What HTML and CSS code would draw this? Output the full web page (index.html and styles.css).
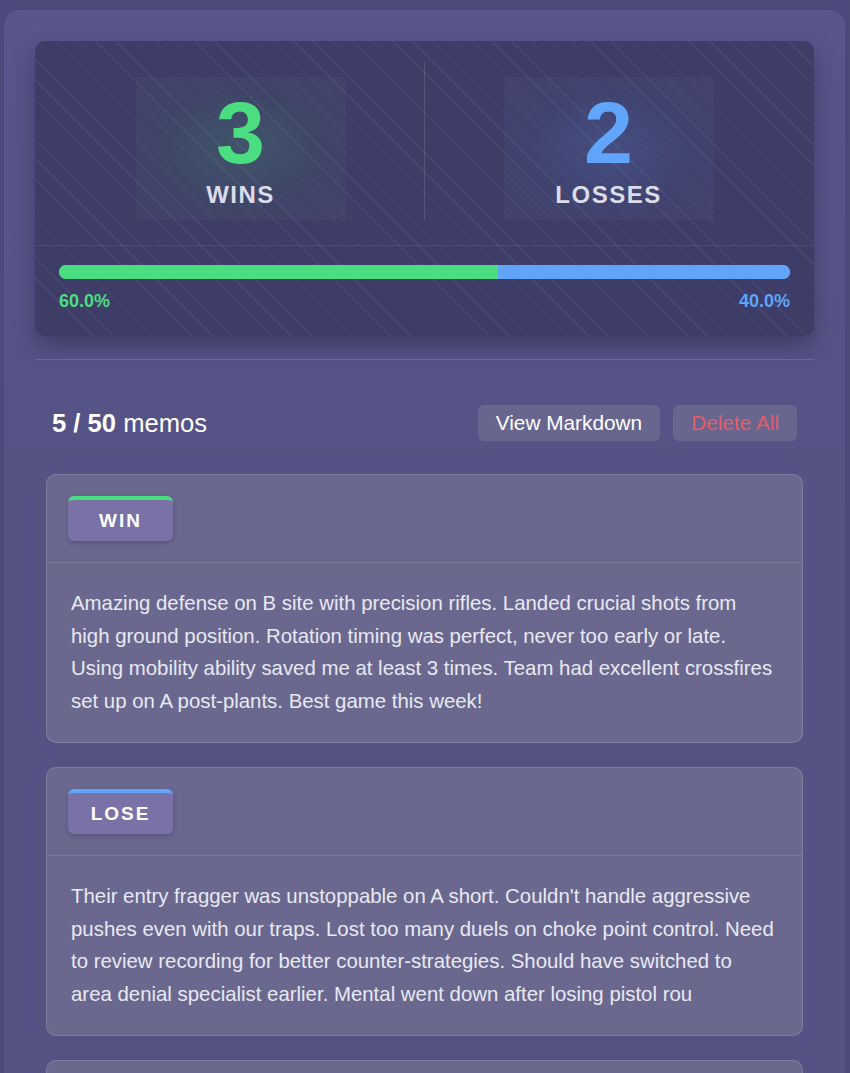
FILE: index.html
```html
<!DOCTYPE html>
<html lang="en">
<head>
<meta charset="utf-8">
<title>Match Memos</title>
<link rel="stylesheet" href="styles.css">
</head>
<body>
<main class="app">
  <section class="stats-card">
    <div class="stats-row">
      <div class="stat-col">
        <div class="stat-box stat-win">
          <div class="stat-num">3</div>
          <div class="stat-label">WINS</div>
        </div>
      </div>
      <div class="stat-divider"></div>
      <div class="stat-col">
        <div class="stat-box stat-loss">
          <div class="stat-num">2</div>
          <div class="stat-label">LOSSES</div>
        </div>
      </div>
    </div>
    <div class="progress-area">
      <div class="bar">
        <div class="bar-win" style="width:60%"></div>
        <div class="bar-loss"></div>
      </div>
      <div class="pct-row">
        <span class="pct-win">60.0%</span>
        <span class="pct-loss">40.0%</span>
      </div>
    </div>
  </section>

  <hr class="sep">

  <section class="memos">
    <div class="memos-head">
      <div class="count"><strong>5 / 50</strong> memos</div>
      <div class="actions">
        <button class="btn">View Markdown</button>
        <button class="btn btn-danger">Delete All</button>
      </div>
    </div>

    <article class="memo">
      <div class="memo-head"><span class="badge badge-win">WIN</span></div>
      <div class="memo-body">Amazing defense on B site with precision rifles. Landed crucial shots from high ground position. Rotation timing was perfect, never too early or late. Using mobility ability saved me at least 3 times. Team had excellent crossfires set up on A post-plants. Best game this week!</div>
    </article>

    <article class="memo">
      <div class="memo-head"><span class="badge badge-lose">LOSE</span></div>
      <div class="memo-body">Their entry fragger was unstoppable on A short. Couldn't handle aggressive pushes even with our traps. Lost too many duels on choke point control. Need to review recording for better counter-strategies. Should have switched to area denial specialist earlier. Mental went down after losing pistol rou</div>
    </article>

    <article class="memo">
      <div class="memo-head"><span class="badge badge-win">WIN</span></div>
      <div class="memo-body">Great comms and utility usage all game. Clutched two rounds on retake.</div>
    </article>
  </section>
</main>
</body>
</html>
```

FILE: styles.css
```css
* { box-sizing: border-box; }

html, body {
  margin: 0;
  padding: 0;
}

body {
  background: #4b4a7b;
  font-family: "Liberation Sans", Arial, sans-serif;
  color: #ffffff;
  overflow: hidden;
}

.app {
  margin: 10px 5px 0 4px;
  border-radius: 16px;
  background: linear-gradient(180deg, #58568a 0%, #555384 40%, #545282 100%);
  padding: 31px 31px 40px;
  min-height: 1100px;
}

/* Stats card */
.stats-card {
  border-radius: 10px;
  background-color: #3e3d67;
  background-image: repeating-linear-gradient(45deg,
    rgba(255,255,255,0) 0px,
    rgba(255,255,255,0) 13px,
    rgba(255,255,255,0.06) 13px,
    rgba(255,255,255,0.06) 14px);
  box-shadow: 0 10px 22px rgba(20, 18, 50, 0.35);
}

.stats-row {
  display: flex;
  padding: 21px 22px 25px;
  border-bottom: 1px solid rgba(255,255,255,0.08);
}

.stat-col {
  flex: 1;
  display: flex;
  justify-content: center;
  padding-top: 15px;
}

.stat-divider {
  width: 1px;
  background: rgba(255,255,255,0.12);
}

.stat-box {
  width: 210px;
  padding: 12px 0 11px;
  display: flex;
  flex-direction: column;
  align-items: center;
  gap: 4px;
}

.stat-win {
  background: radial-gradient(ellipse at center, rgba(74,222,128,0.14) 0%, rgba(74,222,128,0.05) 55%, rgba(255,255,255,0.025) 100%);
}

.stat-loss {
  background: radial-gradient(ellipse at center, rgba(96,165,250,0.17) 0%, rgba(96,165,250,0.06) 55%, rgba(255,255,255,0.025) 100%);
}

.stat-num {
  font-size: 88px;
  font-weight: 700;
  line-height: 1;
}

.stat-win .stat-num { color: #4ade80; }
.stat-loss .stat-num { color: #60a5fa; }

.stat-label {
  font-size: 24px;
  font-weight: 700;
  letter-spacing: 1.5px;
  color: #dcdce8;
}

.progress-area {
  padding: 19px 24px 24px;
}

.bar {
  display: flex;
  height: 14px;
  border-radius: 7px;
  overflow: hidden;
  background: #60a5fa;
}

.bar-win { background: #4ade80; }
.bar-loss { flex: 1; background: #60a5fa; }

.pct-row {
  display: flex;
  justify-content: space-between;
  margin-top: 12px;
  font-size: 18px;
  font-weight: 700;
}

.pct-win { color: #4ade80; }
.pct-loss { color: #60a5fa; }

.sep {
  margin: 23px 0 0;
  border: 0;
  height: 1px;
  background: rgba(255,255,255,0.14);
}

/* Memos */
.memos {
  padding: 0 11px;
}

.memos-head {
  display: flex;
  justify-content: space-between;
  align-items: center;
  margin-top: 45px;
  padding: 0 6px;
}

.count {
  font-size: 25.6px;
  color: #ffffff;
}

.count strong { font-weight: 700; }

.actions {
  display: flex;
  gap: 13px;
}

.btn {
  height: 36px;
  padding: 0 18px;
  border: 0;
  border-radius: 6px;
  background: #68668f;
  color: #ffffff;
  font-family: "Liberation Sans", Arial, sans-serif;
  font-size: 20.8px;
}

.btn-danger {
  color: #e35d6a;
}

.memo {
  margin-top: 24px;
  border-radius: 10px;
  background: #6a688f;
  border: 1px solid rgba(255,255,255,0.14);
}

.memos-head + .memo { margin-top: 33px; }

.memo-head {
  padding: 21px;
  border-bottom: 1px solid rgba(255,255,255,0.12);
}

.badge {
  display: inline-block;
  width: 105px;
  padding: 8px 0;
  line-height: 25px;
  text-align: center;
  border-radius: 6px;
  background: #7a71a6;
  color: #ffffff;
  font-size: 19px;
  font-weight: 700;
  letter-spacing: 2px;
  border-top: 4px solid;
  box-shadow: 0 2px 4px rgba(30, 25, 70, 0.25);
}

.badge-win { border-top-color: #4ade80; }
.badge-lose { border-top-color: #60a5fa; }

.memo-body {
  padding: 24px 26px 25px 24px;
  font-size: 20.4px;
  line-height: 32.5px;
  color: #e8e8f2;
}
```
